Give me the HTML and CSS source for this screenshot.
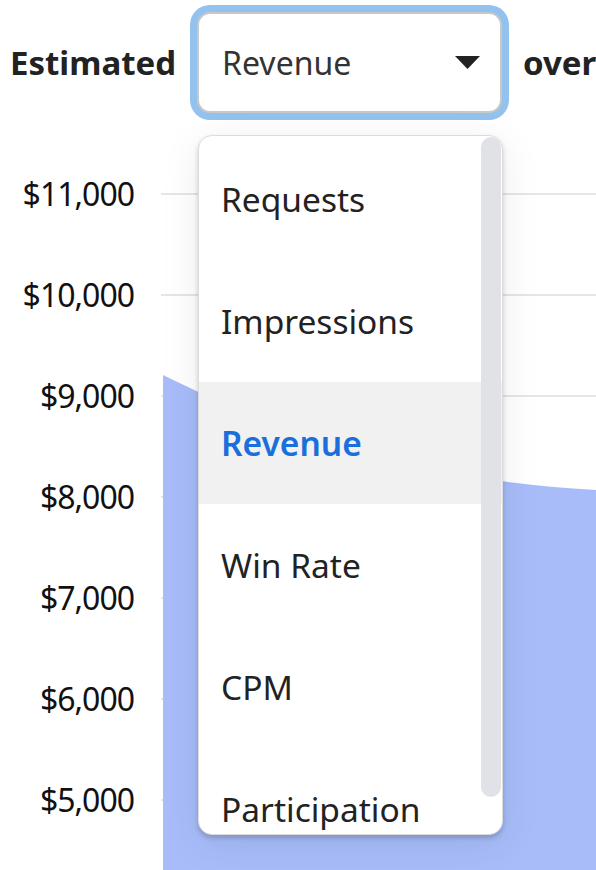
FILE: index.html
```html
<!DOCTYPE html>
<html>
<head>
<meta charset="utf-8">
<link rel="stylesheet" href="styles.css">
</head>
<body>
<div class="page">
  <div class="toolbar">
    <span class="title">Estimated</span>
    <div class="select">
      <span class="select-value">Revenue</span>
      <svg class="caret" width="25" height="13" viewBox="0 0 25 13"><path d="M0 0 H25 L12.5 13 Z" fill="#222"/></svg>
    </div>
    <span class="title">over</span>
  </div>

  <div class="chart">
    <div class="labels">
      <div class="label">$11,000</div>
      <div class="label">$10,000</div>
      <div class="label">$9,000</div>
      <div class="label">$8,000</div>
      <div class="label">$7,000</div>
      <div class="label">$6,000</div>
      <div class="label">$5,000</div>
    </div>
    <div class="plot">
      <div class="gridrow"></div>
      <div class="gridrow"></div>
      <div class="gridrow"></div>
      <div class="gridrow"></div>
      <div class="gridrow"></div>
      <div class="gridrow"></div>
      <div class="gridrow"></div>
      <div class="gridrow"></div>
      <svg class="area" width="435" height="760" viewBox="0 0 435 760">
        <path d="M2 232 C 90 275, 220 335, 435 347 L435 760 L2 760 Z" fill="#a7bcf9"/>
      </svg>
    </div>
  </div>

  <div class="menu">
    <ul class="menu-list">
      <li class="menu-item">Requests</li>
      <li class="menu-item">Impressions</li>
      <li class="menu-item active">Revenue</li>
      <li class="menu-item">Win Rate</li>
      <li class="menu-item">CPM</li>
      <li class="menu-item">Participation</li>
    </ul>
    <div class="scroll-thumb"></div>
  </div>
</div>
</body>
</html>
```

FILE: styles.css
```css
html, body {
  margin: 0;
  padding: 0;
  background: #fff;
  overflow: hidden;
}

body {
  font-family: "Noto Sans", "Open Sans", sans-serif;
  color: #111;
  width: 596px;
  height: 870px;
}

.page {
  position: relative;
  width: 596px;
  height: 870px;
  overflow: hidden;
}

.toolbar {
  display: flex;
  align-items: center;
  gap: 21px;
  padding: 12px 0 0 10px;
  height: 101px;
  white-space: nowrap;
}

.title {
  flex-shrink: 0;
  font-size: 33px;
  font-weight: 700;
  color: #222;
}

.select {
  flex-shrink: 0;
  box-sizing: border-box;
  width: 305px;
  height: 101px;
  border: 2px solid #c8c8c8;
  border-radius: 13px;
  box-shadow: 0 0 0 7px #93c2ef;
  display: flex;
  align-items: center;
  justify-content: space-between;
  padding: 0 20px 0 23px;
  background: #fff;
}

.select-value {
  font-size: 32px;
  color: #333;
}

.caret {
  display: block;
}

.chart {
  display: grid;
  grid-template-columns: 161px 1fr;
  margin-top: 30px;
  height: 727px;
}

.labels {
  display: flex;
  flex-direction: column;
}

.label {
  height: 101px;
  flex-shrink: 0;
  display: flex;
  align-items: center;
  justify-content: flex-end;
  padding-right: 27px;
  font-size: 32px;
  letter-spacing: -1px;
  color: #111;
}

.plot {
  position: relative;
  overflow: hidden;
  display: flex;
  flex-direction: column;
}

.gridrow {
  height: 101px;
  flex-shrink: 0;
  display: flex;
  align-items: center;
}

.gridrow::before {
  content: "";
  display: block;
  width: 100%;
  height: 2px;
  background: #e6e6e6;
}

.area {
  position: absolute;
  left: 0;
  top: 0;
}

.menu {
  position: absolute;
  left: 198px;
  top: 135px;
  width: 305px;
  height: 700px;
  box-sizing: border-box;
  background: #fff;
  border: 1px solid #dcdcdc;
  border-radius: 14px;
  overflow: hidden;
  box-shadow: 0 3px 5px rgba(0, 0, 0, 0.18), 0 8px 40px rgba(0, 0, 0, 0.08);
}

.menu-list {
  list-style: none;
  margin: 0;
  padding: 2px 0 0 0;
}

.menu-item {
  height: 122px;
  display: flex;
  align-items: center;
  padding-left: 22px;
  font-size: 33.5px;
  color: #222;
}

.menu-item.active {
  background: #f1f1f1;
  color: #1a6fdc;
  font-weight: 600;
}

.scroll-thumb {
  position: absolute;
  right: 1px;
  top: 1px;
  width: 20px;
  height: 660px;
  border-radius: 10px;
  background: #e1e2e7;
}
```
